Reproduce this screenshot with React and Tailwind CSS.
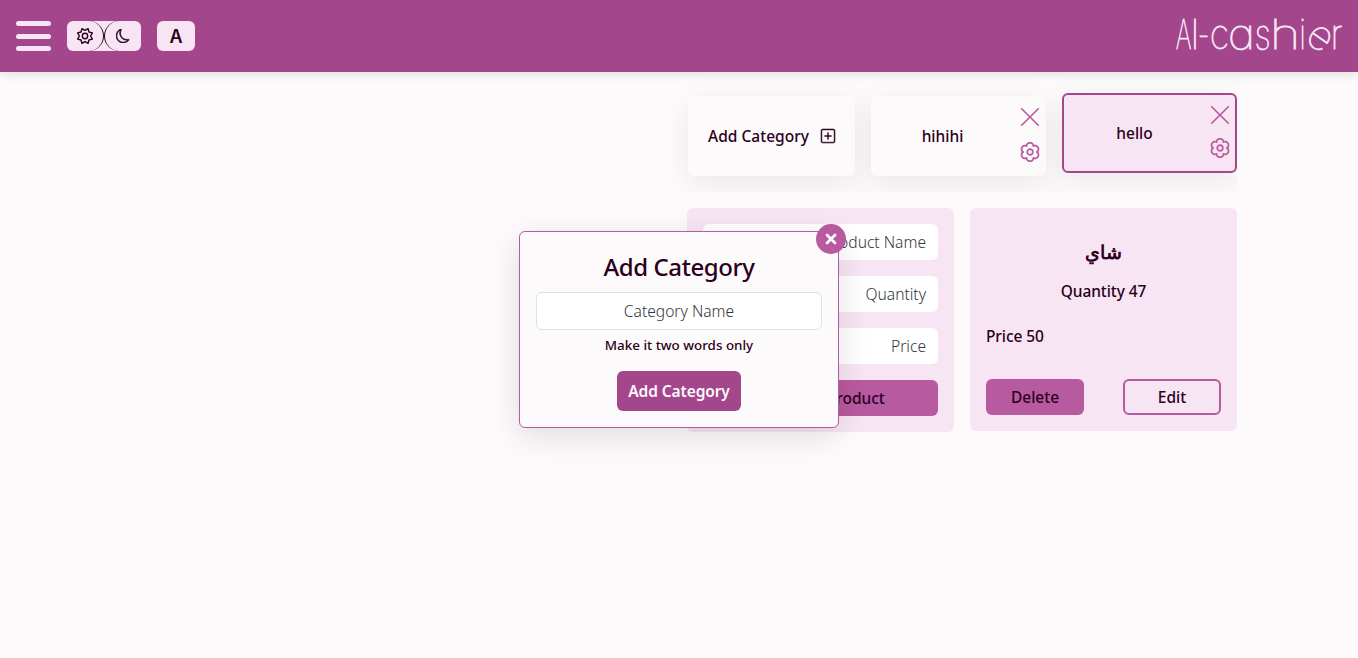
import React from "react";
import { BsMoon, BsPlusSquare } from "react-icons/bs";

function starPath(points, outer, inner) {
  const out = [];
  for (let i = 0; i < points * 2; i++) {
    const angle = (Math.PI * i) / points;
    const r = i % 2 === 0 ? inner : outer;
    out.push(`${(9 + r * Math.sin(angle)).toFixed(2)} ${(9 - r * Math.cos(angle)).toFixed(2)}`);
  }
  return `M${out.join("L")}Z`;
}

function gearPath() {
  const out = [];
  for (let i = 0; i < 120; i++) {
    const angle = (Math.PI * i) / 60;
    const r = 6.7 + 2.5 * Math.pow(Math.abs(Math.cos(3 * angle)), 0.6);
    out.push(`${(10 + r * Math.sin(angle)).toFixed(2)} ${(10 - r * Math.cos(angle)).toFixed(2)}`);
  }
  return `M${out.join("L")}Z`;
}

const SUN = starPath(8, 8, 5.6);
const GEAR = gearPath();

function Sun() {
  return (
    <svg width="18" height="18" viewBox="0 0 18 18" fill="none" stroke="#2b0020" strokeWidth="1.4" strokeLinejoin="round">
      <circle cx="9" cy="9" r="2.7" />
      <path d={SUN} />
    </svg>
  );
}

function Gear({ className }) {
  return (
    <svg className={className} width="20" height="20" viewBox="0 0 20 20" fill="none" stroke="currentColor" strokeWidth="1.7" strokeLinejoin="round">
      <circle cx="10" cy="10" r="2.8" />
      <path d={GEAR} />
    </svg>
  );
}

function Cross() {
  return (
    <svg width="20" height="20" viewBox="0 0 20 20" fill="none" stroke="currentColor" strokeWidth="1.6" strokeLinecap="round">
      <path d="M1.7 1.7 L18.3 18.3 M18.3 1.7 L1.7 18.3" />
    </svg>
  );
}

function Logo() {
  return (
    <div className="-mr-[3px] flex pb-1 font-[Inter] text-[41px] leading-[60px] font-thin text-[#f7e5f3] [-webkit-text-stroke:0.8px_#f7e5f3] [font-feature-settings:'cv11']">
      <span className="flex w-[17px] scale-x-[0.6] justify-center">A</span>
      <span className="flex w-[6px] justify-center">l</span>
      <span className="flex w-[11px] scale-x-[0.65] justify-center">-</span>
      <span className="flex w-[21px] scale-x-[0.88] justify-center">c</span>
      <span className="flex w-[23px] scale-x-[1.15] justify-center">a</span>
      <span className="flex w-[19px] scale-x-[0.8] justify-center">s</span>
      <span className="flex w-[26px] scale-x-[1.28] justify-center">h</span>
      <span className="flex w-[9px] scale-x-75 justify-center">i</span>
      <span className="flex w-[21px] origin-[50%_62%] rotate-[35deg] justify-center">e</span>
      <span className="flex w-[17px] scale-x-90 justify-center">r</span>
    </div>
  );
}

function Header() {
  return (
    <header className="relative z-10 flex h-[72px] items-center justify-between bg-[#a3468c] px-4 shadow-[0_2px_10px_rgba(0,0,0,0.12)]">
      <div className="flex items-center gap-4">
        <div className="flex h-[30px] w-[35px] flex-col justify-between">
          <span className="h-[5px] rounded-full bg-[#f7e5f3]" />
          <span className="h-[5px] rounded-full bg-[#f7e5f3]" />
          <span className="h-[5px] rounded-full bg-[#f7e5f3]" />
        </div>
        <div className="flex h-[30px] w-[74px] overflow-hidden rounded-md bg-[#f7e5f3]">
          <div className="flex w-[37px] items-center justify-center rounded-r-full border-r border-[#2b0020]">
            <Sun />
          </div>
          <div className="flex w-[37px] items-center justify-center rounded-l-full border-l border-[#2b0020]">
            <BsMoon size={14} color="#2b0020" strokeWidth={0.7} />
          </div>
        </div>
        <div className="flex h-[30px] w-[38px] items-center justify-center rounded-md bg-[#f7e5f3] font-[Inter] text-[18px] font-semibold">
          A
        </div>
      </div>
      <Logo />
    </header>
  );
}

function Category({ name, selected }) {
  return (
    <div
      className={
        selected
          ? "flex h-20 w-[175px] -translate-y-[3px] rounded-md border-2 border-[#a3468c] bg-[#f7e5f3] shadow-[0_8px_32px_rgba(0,0,0,0.08)]"
          : "flex h-20 w-[175px] rounded-md bg-[#fcfafb] shadow-[0_8px_32px_rgba(0,0,0,0.08)]"
      }
    >
      <div className="flex flex-1 items-center justify-center pt-0.5">{name}</div>
      <div className={selected ? "flex w-[30px] flex-col items-center pt-2.5 text-[#b85a9f]" : "flex w-8 flex-col items-center pt-[11px] text-[#b85a9f]"}>
        <Cross />
        <Gear className={selected ? "mt-[13px]" : "mt-[15px]"} />
      </div>
    </div>
  );
}

function Field({ label }) {
  return <div className="h-9 rounded-md bg-white px-3 text-right text-[15.6px] leading-[37px] font-light text-[#33363b]">{label}</div>;
}

function Modal() {
  return (
    <div className="absolute top-[231px] left-[519px] z-20 flex h-[197px] w-80 flex-col items-center rounded-md border border-[#b85a9f] bg-[#fcfafb] px-4 shadow-[0_8px_32px_rgba(0,0,0,0.12)]">
      <div className="absolute -top-2 -right-2 flex size-[30px] items-center justify-center rounded-full bg-[#b85a9f]">
        <svg width="12" height="12" viewBox="0 0 12 12" stroke="#fcfafb" strokeWidth="2.8" strokeLinecap="round">
          <path d="M2 2 L10 10 M10 2 L2 10" />
        </svg>
      </div>
      <h2 className="mt-[19px] text-2xl leading-8 font-medium tracking-[-0.4px]">Add Category</h2>
      <div className="mt-[9px] h-[38px] w-full rounded-md border border-[#dee2e6] bg-white text-center text-[15.6px] leading-[37px] font-light text-[#33363b]">
        Category Name
      </div>
      <p className="mt-[5px] text-[13.4px] leading-5">Make it two words only</p>
      <button className="mt-4 h-10 w-[124px] rounded-md bg-[#a3468c] pt-0.5 text-[15.5px] font-semibold tracking-[-0.1px] text-[#fcfafb]">Add Category</button>
    </div>
  );
}

export default function App() {
  return (
    <div className="relative h-[658px] overflow-hidden bg-[#fcfafb] font-['Noto_Sans',sans-serif] text-[15.5px] font-medium text-[#2b0020]">
      <Header />
      <main className="ml-[121px] w-[1116px]">
        <div className="flex h-[120px] justify-end gap-4 overflow-hidden pt-6">
          <div className="flex h-20 w-[167px] items-center justify-center gap-3 rounded-md bg-[#fcfafb] shadow-[0_8px_32px_rgba(0,0,0,0.08)]">
            <span className="pt-0.5">Add Category</span>
            <BsPlusSquare size={14} strokeWidth={0.6} className="overflow-visible" />
          </div>
          <Category name="hihihi" />
          <Category name="hello" selected />
        </div>
        <div className="mt-4 flex items-start justify-end gap-4">
          <section className="flex h-56 w-[267px] flex-col gap-4 rounded-md bg-[#f7e5f3] p-4">
            <Field label="Product Name" />
            <Field label="Quantity" />
            <Field label="Price" />
            <button className="h-9 rounded-md bg-[#b85a9f] pt-0.5">Add New Product</button>
          </section>
          <section className="flex h-[223px] w-[267px] flex-col rounded-md bg-[#f7e5f3] px-4">
            <h3 lang="ar" dir="rtl" className="mt-[29px] text-center text-[19px] leading-[30px] font-semibold">شاي</h3>
            <p className="mt-3 text-center leading-6 tracking-[-0.1px]">Quantity 47</p>
            <p className="mt-[21px] leading-6 tracking-[-0.1px]">Price 50</p>
            <div className="mt-[31px] flex justify-between">
              <button className="h-9 w-[98px] rounded-md bg-[#b85a9f] pt-0.5">Delete</button>
              <button className="h-9 w-[98px] rounded-md border-2 border-[#b85a9f] pt-0.5">Edit</button>
            </div>
          </section>
        </div>
      </main>
      <Modal />
    </div>
  );
}
